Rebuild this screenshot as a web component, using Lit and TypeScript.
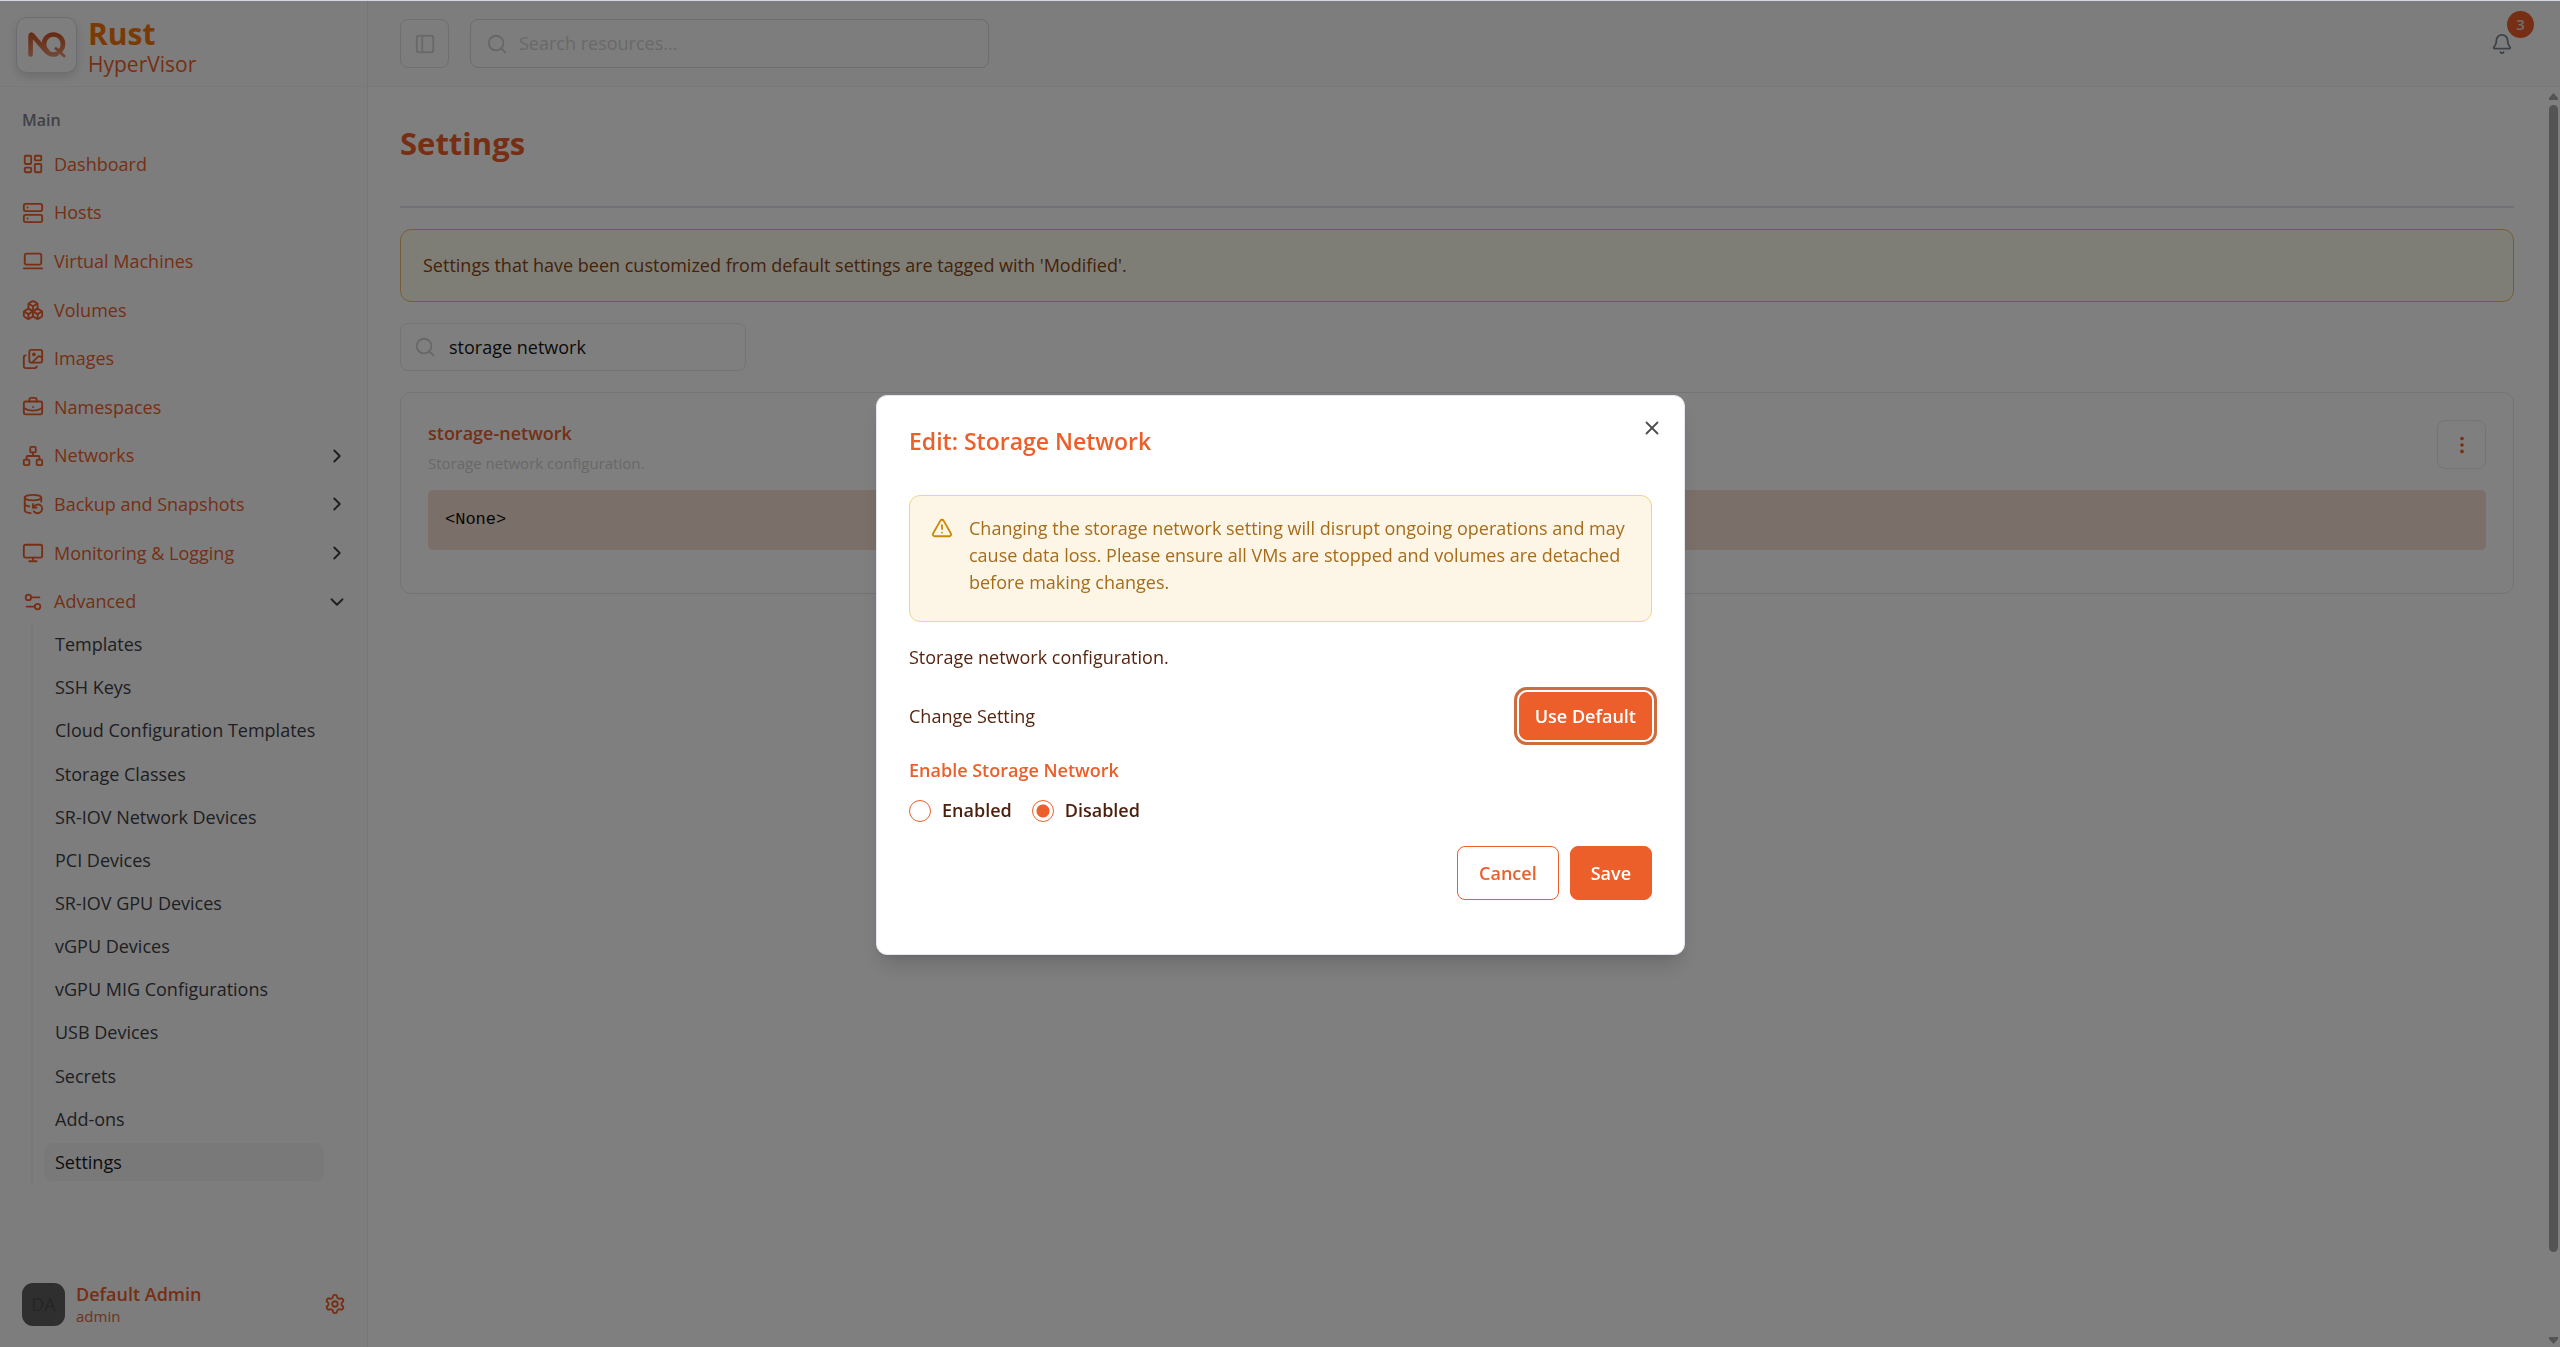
import { LitElement, html, css, svg, nothing } from "lit";
import { customElement, property, state } from "lit/decorators.js";
import { classMap } from "lit/directives/class-map.js";

/* 24x24 stroke icons */
const icons: Record<string, unknown> = {
  dashboard: svg`<rect width="7" height="9" x="3" y="3" rx="1"/><rect width="7" height="5" x="14" y="3" rx="1"/><rect width="7" height="9" x="14" y="12" rx="1"/><rect width="7" height="5" x="3" y="16" rx="1"/>`,
  server: svg`<rect width="20" height="8" x="2" y="2" rx="2"/><rect width="20" height="8" x="2" y="14" rx="2"/><path d="M6 6h.01M6 18h.01"/>`,
  laptop: svg`<rect width="18" height="12" x="3" y="4" rx="2"/><path d="M2 20h20"/>`,
  boxes: svg`<path d="M2.97 12.92A2 2 0 0 0 2 14.63v3.24a2 2 0 0 0 .97 1.71l3 1.8a2 2 0 0 0 2.06 0L12 19v-5.5l-5-3-4.03 2.42Z"/><path d="m7 16.5-4.74-2.85"/><path d="m7 16.5 5-3"/><path d="M7 16.5v5.17"/><path d="M12 13.5V19l3.97 2.38a2 2 0 0 0 2.06 0l3-1.8a2 2 0 0 0 .97-1.71v-3.24a2 2 0 0 0-.97-1.71L17 10.5l-5 3Z"/><path d="m17 16.5-5-3"/><path d="m17 16.5 4.74-2.85"/><path d="M17 16.5v5.17"/><path d="M7.97 4.42A2 2 0 0 0 7 6.13v4.37l5 3 5-3V6.13a2 2 0 0 0-.97-1.71l-3-1.8a2 2 0 0 0-2.06 0l-3 1.8Z"/><path d="M12 8 7.26 5.15"/><path d="m12 8 4.74-2.85"/><path d="M12 13.5V8"/>`,
  images: svg`<path d="m22 11-1.296-1.296a2.4 2.4 0 0 0-3.408 0L11 16"/><path d="M4 8a2 2 0 0 0-2 2v10a2 2 0 0 0 2 2h10a2 2 0 0 0 2-2"/><circle cx="13" cy="7" r="1" fill="currentColor"/><rect x="8" y="2" width="14" height="14" rx="2"/>`,
  briefcase: svg`<path d="M12 12h.01"/><path d="M16 6V4a2 2 0 0 0-2-2h-4a2 2 0 0 0-2 2v2"/><path d="M22 13a18.15 18.15 0 0 1-20 0"/><rect width="20" height="14" x="2" y="6" rx="2"/>`,
  network: svg`<rect x="16" y="16" width="6" height="6" rx="1"/><rect x="2" y="16" width="6" height="6" rx="1"/><rect x="9" y="2" width="6" height="6" rx="1"/><path d="M5 16v-3a1 1 0 0 1 1-1h12a1 1 0 0 1 1 1v3"/><path d="M12 12V8"/>`,
  backup: svg`<ellipse cx="12" cy="5" rx="9" ry="3"/><path d="M3 12a9 3 0 0 0 5 2.69"/><path d="M21 9.3V5"/><path d="M3 5v14a9 3 0 0 0 6.47 2.88"/><path d="M12 12v4h4"/><path d="M13 20a5 5 0 0 0 9-3 4.5 4.5 0 0 0-4.5-4.5c-1.33 0-2.54.54-3.41 1.41L12 16"/>`,
  monitor: svg`<rect width="20" height="14" x="2" y="3" rx="2"/><path d="M8 21h8M12 17v4"/>`,
  sliders: svg`<path d="M14 17H5"/><path d="M19 7h-9"/><circle cx="17" cy="17" r="3"/><circle cx="7" cy="7" r="3"/>`,
  gear: svg`<path d="M9.671 4.136a2.34 2.34 0 0 1 4.659 0 2.34 2.34 0 0 0 3.319 1.915 2.34 2.34 0 0 1 2.33 4.033 2.34 2.34 0 0 0 0 3.831 2.34 2.34 0 0 1-2.33 4.033 2.34 2.34 0 0 0-3.319 1.915 2.34 2.34 0 0 1-4.659 0 2.34 2.34 0 0 0-3.32-1.915 2.34 2.34 0 0 1-2.33-4.033 2.34 2.34 0 0 0 0-3.831A2.34 2.34 0 0 1 6.35 6.051a2.34 2.34 0 0 0 3.319-1.915"/><circle cx="12" cy="12" r="3"/>`,
  right: svg`<path d="m9 18 6-6-6-6"/>`,
  down: svg`<path d="m6 9 6 6 6-6"/>`,
  panel: svg`<rect width="18" height="18" x="3" y="3" rx="2"/><path d="M9 3v18"/>`,
  search: svg`<circle cx="11" cy="11" r="8"/><path d="m21 21-4.3-4.3"/>`,
  bell: svg`<path d="M10.268 21a2 2 0 0 0 3.464 0"/><path d="M3.262 15.326A1 1 0 0 0 4 17h16a1 1 0 0 0 .74-1.673C19.41 13.956 18 12.499 18 8A6 6 0 0 0 6 8c0 4.499-1.411 5.956-2.738 7.326"/>`,
  more: svg`<circle cx="12" cy="12" r="1"/><circle cx="12" cy="5" r="1"/><circle cx="12" cy="19" r="1"/>`,
  close: svg`<path d="M18 6 6 18"/><path d="m6 6 12 12"/>`,
  warning: svg`<path d="m21.73 18-8-14a2 2 0 0 0-3.48 0l-8 14A2 2 0 0 0 4 21h16a2 2 0 0 0 1.73-3"/><path d="M12 9v4"/><path d="M12 17h.01"/>`,
};

@customElement("ui-icon")
class UiIcon extends LitElement {
  @property() name = "";
  static styles = css`
    :host { display: inline-flex; flex: none; width: 22px; height: 22px; }
    svg { width: 100%; height: 100%; fill: none; stroke: currentColor; stroke-width: 2; stroke-linecap: round; stroke-linejoin: round; }
  `;
  render() {
    return html`<svg viewBox="0 0 24 24" aria-hidden="true">${icons[this.name]}</svg>`;
  }
}

interface NavItem { icon: string; label: string; group?: boolean; open?: boolean }

const NAV: NavItem[] = [
  { icon: "dashboard", label: "Dashboard" },
  { icon: "server", label: "Hosts" },
  { icon: "laptop", label: "Virtual Machines" },
  { icon: "boxes", label: "Volumes" },
  { icon: "images", label: "Images" },
  { icon: "briefcase", label: "Namespaces" },
  { icon: "network", label: "Networks", group: true },
  { icon: "backup", label: "Backup and Snapshots", group: true },
  { icon: "monitor", label: "Monitoring & Logging", group: true },
  { icon: "sliders", label: "Advanced", group: true, open: true },
];

const SUB = [
  "Templates", "SSH Keys", "Cloud Configuration Templates", "Storage Classes",
  "SR-IOV Network Devices", "PCI Devices", "SR-IOV GPU Devices", "vGPU Devices",
  "vGPU MIG Configurations", "USB Devices", "Secrets", "Add-ons", "Settings",
];

@customElement("app-sidebar")
class AppSidebar extends LitElement {
  static styles = css`
    :host { display: flex; flex-direction: column; width: 368px; flex: none; box-sizing: border-box; background: #fafafa; border-right: 1px solid #ececee; color: #ec5f2a; }
    .brand { display: flex; align-items: center; gap: 11px; height: 86px; padding: 2px 16px 0; box-sizing: border-box; border-bottom: 1px solid #f2f2f2; }
    .mark { display: flex; align-items: center; justify-content: center; width: 61px; height: 56px; box-sizing: border-box; border: 1px solid #d9dae0; border-radius: 11px; background: #fdfdfd; box-shadow: 0 4px 8px rgba(0, 0, 0, 0.12); }
    .mark svg { width: 38px; height: 28px; }
    .name { display: flex; flex-direction: column; padding-top: 6px; }
    .product { font-size: 30px; line-height: 32px; font-weight: 700; color: #f5740b; }
    .kind { font-size: 21px; line-height: 28px; }
    nav { padding: 22px 10px 0 22px; }
    .caption { margin: 0; font-size: 16px; line-height: 22px; font-weight: 600; color: #80838a; }
    ul { list-style: none; margin: 0; padding: 0; display: grid; grid-auto-rows: 1fr; }
    .menu { min-height: 486px; margin-top: 9px; }
    .item { display: flex; align-items: center; gap: 10px; width: 100%; height: 100%; padding: 0 9px 0 0; box-sizing: border-box; border: 0; background: none; color: inherit; font: inherit; text-align: left; text-decoration: none; }
    .item span { flex: 1; }
    .chevron { color: #3c3c40; }
    .sub { min-height: 561px; margin: -3px 0 0 9px; border-left: 2px solid #f0f0f1; padding-left: 11px; }
    .sub li { display: flex; align-items: center; }
    .subitem { display: flex; align-items: center; width: 280px; height: 38px; padding-left: 11px; box-sizing: border-box; border-radius: 9px; color: #3d3f45; text-decoration: none; }
    .subitem.active { background: #f3f3f4; color: #18181b; }
    .user { display: flex; align-items: center; gap: 11px; margin-top: auto; padding: 0 21px 21px 22px; }
    .avatar { display: flex; align-items: center; justify-content: center; width: 43px; height: 43px; border-radius: 11px; background: #5e5e5e; color: #4b4b4b; }
    .who { flex: 1; display: flex; flex-direction: column; }
    .who b { font-weight: 600; line-height: 24px; }
    .who small { font-size: 15px; line-height: 20px; color: #d9653a; }
    .gear { display: flex; padding: 0; border: 0; background: none; color: inherit; }
  `;
  render() {
    return html`
      <div class="brand">
        <div class="mark">
          <svg viewBox="0 0 38 28" fill="none" role="img" aria-label="NQ">
            <defs>
              <linearGradient id="g" x1="0" y1="0" x2="0" y2="28" gradientUnits="userSpaceOnUse">
                <stop offset="0" stop-color="#c94f1e" /><stop offset="1" stop-color="#ea9675" />
              </linearGradient>
            </defs>
            <g stroke="url(#g)" stroke-width="4.6" stroke-linecap="round" stroke-linejoin="round">
              <path d="M2.600 23.500V5q0-2.500 2-.5l12.500 14.500q5 6 11.500 4" />
              <path d="M19 20a9.500 9.500 0 1 1 13 0" />
              <path d="M28 17.500l8 7.500" stroke-width="3" />
            </g>
          </svg>
        </div>
        <div class="name"><span class="product">Rust</span><span class="kind">HyperVisor</span></div>
      </div>
      <nav aria-label="Main">
        <h2 class="caption">Main</h2>
        <ul class="menu">
          ${NAV.map((n) => html`<li>${n.group
            ? html`<button class="item" aria-expanded=${n.open ? "true" : "false"}><ui-icon name=${n.icon}></ui-icon><span>${n.label}</span><ui-icon class="chevron" name=${n.open ? "down" : "right"}></ui-icon></button>`
            : html`<a class="item" href="#"><ui-icon name=${n.icon}></ui-icon><span>${n.label}</span></a>`}</li>`)}
        </ul>
        <ul class="sub">
          ${SUB.map((s) => html`<li><a class=${classMap({ subitem: true, active: s === "Settings" })} href="#" aria-current=${s === "Settings" ? "page" : nothing}>${s}</a></li>`)}
        </ul>
      </nav>
      <div class="user">
        <div class="avatar">DA</div>
        <div class="who"><b>Default Admin</b><small>admin</small></div>
        <button class="gear" aria-label="Preferences"><ui-icon name="gear"></ui-icon></button>
      </div>
    `;
  }
}

@customElement("edit-dialog")
class EditDialog extends LitElement {
  @state() private mode = "Disabled";
  static styles = css`
    :host { position: fixed; inset: 1px 0 0; box-sizing: border-box; padding: 2px 0 0 1px; display: flex; align-items: center; justify-content: center; background: rgba(0, 0, 0, 0.5); }
    .dialog { position: relative; width: 809px; max-width: 100%; box-sizing: border-box; padding: 32px 32px 54px; border: 1px solid #e4e7ef; border-radius: 11px; background: #fff; color: #57250f; box-shadow: 0 14px 20px -4px rgba(0, 0, 0, 0.14), 0 5px 8px -5px rgba(0, 0, 0, 0.12); }
    h2 { margin: 0; font-size: 23px; line-height: 27px; font-weight: 600; color: #ec5f2a; }
    .close { position: absolute; top: 21px; right: 21px; display: flex; padding: 0; border: 0; background: none; color: #4f4f4f; }
    .warning { display: flex; gap: 16px; margin-top: 40px; padding: 19px 20px 25px 21px; border: 1px solid #efd780; border-radius: 11px; background: #fdf6e6; color: #a66c1a; }
    .warning ui-icon { margin-top: 2px; color: #c98a08; }
    p { margin: 0; }
    .summary { margin-top: 22px; }
    .row { display: flex; align-items: center; justify-content: space-between; margin-top: 21px; }
    button { font: inherit; }
    .primary, .outline { box-sizing: border-box; height: 54px; padding: 0 20px; border: 1px solid #ec5f2a; border-radius: 8px; font-weight: 600; }
    .primary { background: #ec5f2a; color: #fff; }
    .outline { background: #fff; color: #ec5f2a; padding: 0 21px; }
    .default { height: 48px; padding: 0 15px; box-shadow: 0 0 0 2px #fff, 0 0 0 5px #cd6c3f; }
    fieldset { margin: 17px 0 0; padding: 0; border: 0; }
    legend { padding: 0; font-weight: 600; color: #ec5f2a; }
    .choices { display: flex; gap: 20px; margin-top: 13px; }
    label { display: flex; align-items: center; gap: 11px; font-weight: 600; color: #4a1f0c; }
    input { appearance: none; width: 22px; height: 22px; margin: 0; border: 1px solid #ec5f2a; border-radius: 50%; background: #fff; }
    input:checked { background: radial-gradient(circle, #ec5f2a 6px, #fff 7px); }
    .actions { display: flex; justify-content: flex-end; gap: 11px; margin-top: 22px; }
  `;
  render() {
    return html`
      <div class="dialog" role="dialog" aria-modal="true" aria-labelledby="title">
        <h2 id="title">Edit: Storage Network</h2>
        <button class="close" aria-label="Close"><ui-icon name="close"></ui-icon></button>
        <div class="warning" role="alert">
          <ui-icon name="warning"></ui-icon>
          <p>Changing the storage network setting will disrupt ongoing operations and may cause data loss. Please ensure all VMs are stopped and volumes are detached before making changes.</p>
        </div>
        <p class="summary">Storage network configuration.</p>
        <div class="row"><span>Change Setting</span><button class="primary default">Use Default</button></div>
        <fieldset>
          <legend>Enable Storage Network</legend>
          <div class="choices">
            ${["Enabled", "Disabled"].map((m) => html`<label for=${m}><input type="radio" id=${m} name="mode" .checked=${this.mode === m} @change=${() => (this.mode = m)} />${m}</label>`)}
          </div>
        </fieldset>
        <div class="actions"><button class="outline">Cancel</button><button class="primary">Save</button></div>
      </div>
    `;
  }
}

@customElement("app-root")
class AppRoot extends LitElement {
  static styles = css`
    :host { display: flex; min-height: 100vh; box-sizing: border-box; border-top: 1px solid #d3d7df; font-family: "Open Sans", "Noto Sans", sans-serif; font-size: 18px; line-height: 27px; background: #fff; }
    .page { flex: 1; min-width: 0; display: flex; flex-direction: column; }
    header { display: flex; align-items: center; gap: 21px; height: 86px; padding: 0 25px 0 32px; box-sizing: border-box; background: #fafafa; border-bottom: 1px solid #f2f2f2; }
    button { font: inherit; }
    .square { display: flex; align-items: center; justify-content: center; width: 49px; height: 49px; padding: 0; box-sizing: border-box; border: 1px solid #dedee0; border-radius: 8px; background: none; }
    .toggle { color: #d2d2d8; }
    .field { display: flex; align-items: center; gap: 11px; height: 49px; padding: 0 15px; box-sizing: border-box; border: 1px solid #dadadc; border-radius: 8px; color: #cfcfd2; }
    .field input { flex: 1; min-width: 0; border: 0; padding: 0; outline: 0; background: none; font: inherit; color: #141414; }
    .field input::placeholder { color: #d3d3d6; opacity: 1; }
    .resources { width: 519px; }
    .filter { width: 346px; height: 48px; gap: 13px; padding: 0 13px; border-color: #e8e8ea; }
    .alerts { position: relative; display: flex; margin-left: auto; padding: 0; border: 0; background: none; color: #7c828f; }
    .alerts ui-icon { margin-right: 22px; }
    .badge { position: absolute; top: -22px; right: 1px; width: 27px; height: 27px; border-radius: 50%; background: #ec5f2a; color: #e8dcd6; font-size: 15px; line-height: 27px; font-weight: 600; text-align: center; }
    .body { flex: 1; display: flex; }
    main { flex: 1; min-width: 0; display: flex; flex-direction: column; align-items: stretch; gap: 21px; padding: 38px 32px; }
    h1 { margin: 0; padding-bottom: 45px; border-bottom: 2px solid #e4e4ec; font-size: 31px; line-height: 36px; font-weight: 700; color: #ec5f2a; }
    .notice { margin: 0; padding: 22px; border: 1px solid #e8bd6f; border-radius: 11px; background: #fefcec; color: #8a4412; }
    .filter { align-self: flex-start; }
    .card { padding: 27px 27px 43px; border: 1px solid #e8e8ee; border-radius: 11px; }
    .top { display: flex; justify-content: space-between; align-items: flex-start; }
    .top h2 { margin: 0; font-size: 18px; line-height: 27px; font-weight: 600; color: #ec5f2a; }
    .top p { margin: 4px 0 0; font-size: 15px; line-height: 24px; color: #d0d0d3; }
    .more { color: #ec5f2a; border-color: #e8e8ea; }
    pre { margin: 15px 0 0; padding: 16px 17px 17px; border-radius: 5px; background: #f6dfd3; color: #0a0a0a; font-family: "Liberation Mono", monospace; font-size: 17px; line-height: 27px; }
    .scroll { display: flex; flex-direction: column; align-items: center; gap: 5px; width: 14px; padding: 6px 0 3px; box-sizing: border-box; }
    .scroll svg { width: 9px; height: 7px; fill: #a8a8a8; }
    .thumb { width: 9px; height: 1147px; border-radius: 5px; background: #a8a8a8; }
    .spacer { flex: 1; }
  `;
  render() {
    return html`
      <app-sidebar></app-sidebar>
      <div class="page">
        <header>
          <button class="square toggle" aria-label="Toggle sidebar"><ui-icon name="panel"></ui-icon></button>
          <div class="field resources"><ui-icon name="search"></ui-icon><input type="search" aria-label="Search resources" placeholder="Search resources..." /></div>
          <button class="alerts" aria-label="Notifications"><ui-icon name="bell"></ui-icon><span class="badge">3</span></button>
        </header>
        <div class="body">
          <main>
            <h1>Settings</h1>
            <p class="notice">Settings that have been customized from default settings are tagged with 'Modified'.</p>
            <div class="field filter"><ui-icon name="search"></ui-icon><input type="text" aria-label="Filter settings" .value=${"storage network"} /></div>
            <section class="card">
              <div class="top">
                <div><h2>storage-network</h2><p>Storage network configuration.</p></div>
                <button class="square more" aria-label="Actions"><ui-icon name="more"></ui-icon></button>
              </div>
              <pre>&lt;None&gt;</pre>
            </section>
          </main>
          <div class="scroll" aria-hidden="true">
            <svg viewBox="0 0 9 7"><path d="M4.500 0 9 5v2H0V5Z" /></svg>
            <div class="thumb"></div>
            <div class="spacer"></div>
            <svg viewBox="0 0 9 7"><path d="M4.500 7 0 2V0h9v2Z" /></svg>
          </div>
        </div>
      </div>
      <edit-dialog></edit-dialog>
    `;
  }
}
